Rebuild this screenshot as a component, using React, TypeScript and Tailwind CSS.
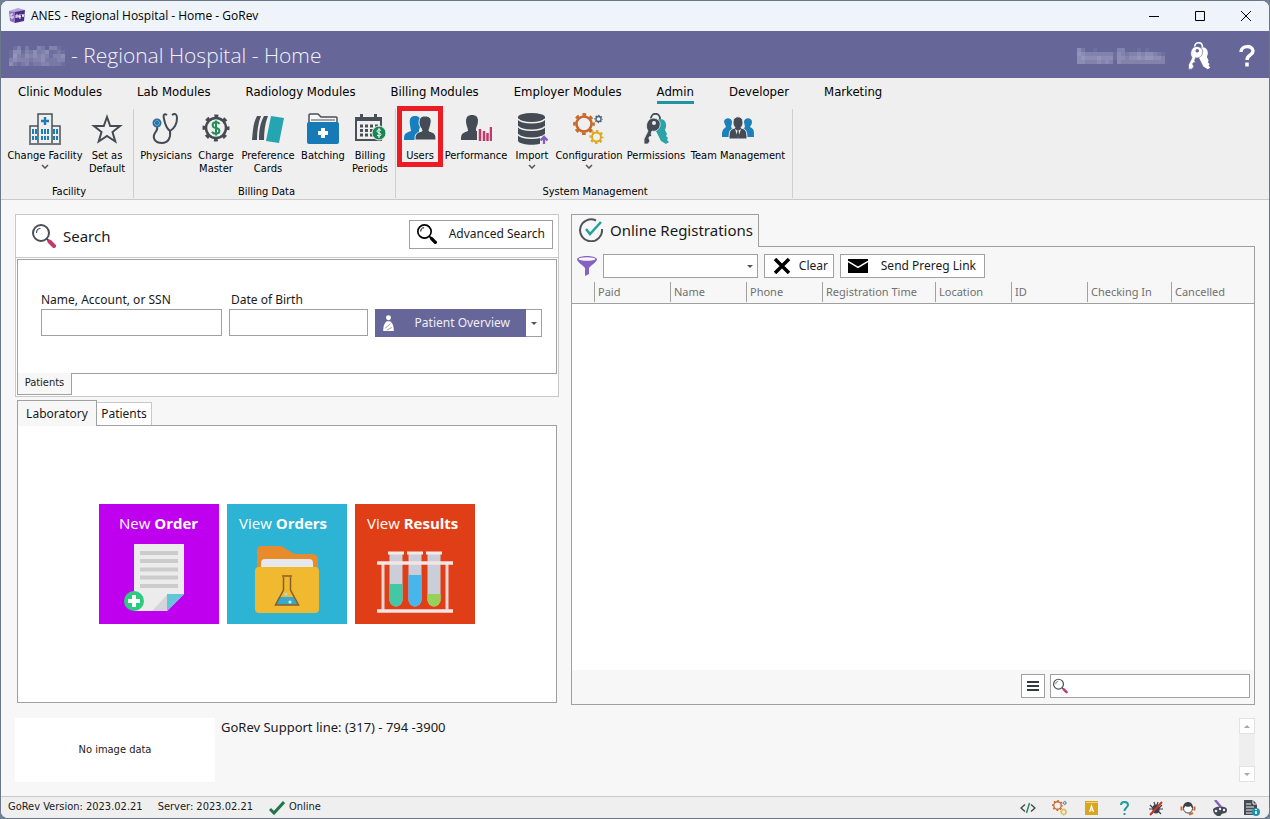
import React, { useState } from "react";

type IconProps = { className?: string };

const menuTabs = [
  "Clinic Modules",
  "Lab Modules",
  "Radiology Modules",
  "Billing Modules",
  "Employer Modules",
  "Admin",
  "Developer",
  "Marketing",
];

const columns = [
  { name: "", width: "w-[22px]" },
  { name: "Paid", width: "w-[76px]" },
  { name: "Name", width: "w-[76px]" },
  { name: "Phone", width: "w-[76px]" },
  { name: "Registration Time", width: "w-[113px]" },
  { name: "Location", width: "w-[76px]" },
  { name: "ID", width: "w-[76px]" },
  { name: "Checking In", width: "w-[84px]" },
  { name: "Cancelled", width: "" },
];

// a cog: ring plus a dashed circle for the teeth
function Cog({ x, y, r, color, line = 2 }: { x: number; y: number; r: number; color: string; line?: number }) {
  const outer = r + line * 0.8;
  const tooth = (Math.PI * 2 * outer) / 16;
  return (
    <g fill="none" stroke={color}>
      <circle cx={x} cy={y} r={r} strokeWidth={line} />
      <circle cx={x} cy={y} r={outer} strokeWidth={line} strokeDasharray={`${tooth} ${tooth}`} strokeDashoffset={tooth / 2} />
    </g>
  );
}

function LogoIcon() {
  return (
    <svg viewBox="0 0 16 16" className="size-4">
      <path d="M0 3 9 0l7 2-6 3z" fill="#b9a4dc" />
      <path d="M0 3l6 1v11L1 13z" fill="#8f74c0" />
      <path d="M6 4l10-2-1 11-9 2z" fill="#4b2f86" />
      <path d="M4 6H2v4h2V8M7 10V7h2v2H7M10 7h2M10 7v3h2M10 8.5h2M13 6l1 3 1-3" fill="none" stroke="#fff" strokeWidth="0.9" />
    </svg>
  );
}

function HospitalIcon() {
  return (
    <svg viewBox="0 0 32 32" className="size-8" fill="none" stroke="#4a5058" strokeWidth="1.5">
      <path d="M9 30V1h14v29M1 30V13h8M23 13h8v17M0 31h32" />
      <path d="M16 4v8M12 8h8" stroke="#1b7db8" strokeWidth="2.4" />
      <path d="M4 16v5M7 16v5M4 23v4M7 23v4M13 16v5M16 16v5M19 16v5M13 23v4M16 23v4M19 23v4M25 16v5M28 16v5M25 23v4M28 23v4" stroke="#1b7db8" strokeWidth="2" />
    </svg>
  );
}

function StarIcon() {
  return (
    <svg viewBox="0 0 32 32" className="size-8" fill="none" stroke="#454b53" strokeWidth="2">
      <path d="M16 4l3.200 9H29l-7.500 6 2.800 9.500L16 23l-8.300 5.500L10.500 19 3 13h9.800z" />
    </svg>
  );
}

function StethoscopeIcon() {
  return (
    <svg viewBox="0 0 32 32" className="size-8" fill="none" stroke="#454b53" strokeWidth="2">
      <path d="M17 2c-3-2-4 0-3 4 1 5 2 9 6 12 5-3 7-8 7-13 0-4-2-5-5-3" />
      <path d="M20 18c1 7-2 12-8 12-7 0-10-5-7-10 2-3 3-4 2-6" />
      <circle cx="7" cy="10" r="3.500" stroke="#2c6d9c" />
      <circle cx="7" cy="10" r="1.200" fill="#1b7db8" stroke="#1b7db8" />
    </svg>
  );
}

function ChargeIcon() {
  return (
    <svg viewBox="0 0 32 32" className="size-8">
      <g fill="none" stroke="#454b53">
        <circle cx="16" cy="15" r="10" strokeWidth="2.500" />
        <circle cx="16" cy="15" r="12" strokeWidth="3" strokeDasharray="4 5.425" strokeDashoffset="2" />
      </g>
      <path d="M19.500 11c-.7-1.300-2-1.700-3.500-1.700-4.500 0-4.500 5 0 5.700s4.500 5.700 0 5.700c-2 0-3.300-.6-4-2M16 7.500v15" fill="none" stroke="#1f9158" strokeWidth="2" />
    </svg>
  );
}

function CardsIcon() {
  return (
    <svg viewBox="0 0 32 32" className="size-8">
      <path d="M5 3h4C6 10 5 19 5 27H0C1 18 1 10 5 3zM12 3h4c-3 7-4 16-4 24H7c0-9 1-17 5-24z" fill="#4a5058" />
      <path d="M19 3l13 2-5 25-13-2z" fill="#25a5b0" />
    </svg>
  );
}

function BatchIcon() {
  return (
    <svg viewBox="0 0 32 32" className="size-8">
      <path d="M2 12V2q0-1 1-1h8l3 3h15q1 0 1 1v7" fill="#f6f6f6" stroke="#4a5058" strokeWidth="1.500" />
      <path d="M4 7h24" stroke="#4a5058" />
      <path d="M0 11q0-2 2-2h28q2 0 2 2v18q0 2-2 2H2q-2 0-2-2z" fill="#1779b5" />
      <path d="M16 15v10M11 20h10" stroke="#fff" strokeWidth="4" />
    </svg>
  );
}

function CalendarIcon() {
  return (
    <svg viewBox="0 0 32 32" className="size-8">
      <path d="M2 5h25v22H2z" fill="none" stroke="#4a5058" strokeWidth="2" />
      <path d="M1 4h27v4H1zM6 1h3v6H6zM20 1h3v6h-3z" fill="#4a5058" />
      <path d="M6 13h18M6 17.500h18M6 22h14" stroke="#4a5058" strokeWidth="3" strokeDasharray="3 2" />
      <circle cx="25" cy="20" r="7" fill="#198754" stroke="#efefef" />
      <path d="M27 17.500c-1-1.200-4-1-4 .7 0 2 4 1.300 4 3.300 0 1.700-3 1.900-4 .5M25 15v10" fill="none" stroke="#fff" />
    </svg>
  );
}

function UsersIcon() {
  return (
    <svg viewBox="0 0 32 32" className="size-8">
      <path d="M6 12C5 5 7 3 11 3s6 2 6 8l-2 6v3l-4 7H0c0-6 1-7 7-9z" fill="#177fbd" />
      <path d="M15 10c0-5 2-7 6-7s7 2 6 7-2 6-2 8c6 2 7 3 7 9H11c0-6 1-7 7-9 0-3-3-4-3-8z" fill="#454b55" stroke="#efefef" />
    </svg>
  );
}

function PerformanceIcon() {
  return (
    <svg viewBox="0 0 32 32" className="size-8">
      <path d="M6 8c0-4 2-6 6-6s6 2 6 6-2 6-2 8v2h1v9H1c0-6 1-7 7-9 0-4-2-5-2-10z" fill="#454b55" />
      <path d="M20 16v12M24 18v10M27.500 20v8M31 14v14" stroke="#c2386a" strokeWidth="2.500" />
    </svg>
  );
}

function DatabaseIcon() {
  return (
    <svg viewBox="0 0 32 32" className="size-8">
      <path d="M2 4v24c3 5 24 5 27 0V4z" fill="#454b55" />
      <ellipse cx="15.500" cy="4" rx="13.500" ry="4" fill="#454b55" />
      <path d="M2 6c4 5 23 5 27 0M2 13.500c4 5 23 5 27 0M2 21.500c4 5 23 5 27 0" fill="none" stroke="#efefef" strokeWidth="1.500" />
      <path d="M24 23h8v9h-8z" fill="#efefef" />
      <path d="M28 31v-7M24.500 27.500 28 24l3.500 3.500" fill="none" stroke="#8260c0" strokeWidth="2.300" />
    </svg>
  );
}

function GearsIcon({ className = "size-8" }: IconProps) {
  return (
    <svg viewBox="0 0 32 32" className={className}>
      <Cog x={11} y={11} r={7.5} color="#c9682a" line={2.6} />
      <Cog x={25.5} y={6} r={2.5} color="#4a6078" line={1.3} />
      <Cog x={23.5} y={24} r={4.5} color="#dfa81b" line={2} />
    </svg>
  );
}

function KeysIcon({ className = "size-8", front = "#454b55", back = "#2ba3a8", gap = "#efefef" }: IconProps & { front?: string; back?: string; gap?: string }) {
  return (
    <svg viewBox="0 0 32 32" className={className}>
      <path d="M17 7c5-3 10 1 9 7l-1 3 2 4-1 2 2 2-1 2 2 2-3 2-5-3-6-12z" fill={back} />
      <path d="M11 6c0-7 9-7 9 0" fill="none" stroke={front} strokeWidth="1.800" />
      <path d="M8 8c4-6 14-2 12 5-1 4-5 6-8 5l-1 3 1 2-3 1v2l1 2-2 3H4v-5l4-8c-2-3-2-7 0-10z" fill={front} stroke={gap} strokeWidth="0.800" />
      <circle cx="14" cy="10" r="2" fill={gap} />
    </svg>
  );
}

function TeamIcon() {
  return (
    <svg viewBox="0 0 32 32" className="size-8">
      <g fill="#1c81b8">
        <path d="M2 9c0-5 8-5 8 0 0 3-1 4-1 5l2 2v8H0c0-6 0-7 4-10z" />
        <path d="M22 9c0-5 8-5 8 0 0 3-2 4-2 5 4 2 4 3 4 10H21v-8l2-2z" />
      </g>
      <path d="M11 9c0-7 10-7 10 0 0 4-2 5-2 6 5 1 6 3 6 11H7c0-8 1-10 6-11 0-1-2-2-2-6z" fill="#454b55" stroke="#efefef" />
      <path d="M13 16l3 9 3-9-3 2z" fill="#efefef" />
      <path d="M15.300 18h1.400l.6 5-1.300 2-1.300-2z" fill="#454b55" />
    </svg>
  );
}

function MagnifierIcon({ className, ring = "#4a5058", handle = "#c2386a" }: IconProps & { ring?: string; handle?: string }) {
  return (
    <svg viewBox="0 0 24 24" className={className} fill="none">
      <circle cx="9" cy="9" r="8" stroke={ring} strokeWidth="2" />
      <path d="M4.500 9c0-3 1.500-4.500 4-4.500" stroke={ring} strokeWidth="1.200" />
      <path d="M14.500 14.500l2.500 2.500" stroke={ring} strokeWidth="2" />
      <path d="M17.500 17.500l4.500 4.500" stroke={handle} strokeWidth="4" strokeLinecap="round" />
    </svg>
  );
}

function Caret({ className = "" }: IconProps) {
  return (
    <svg viewBox="0 0 6 3" className={`h-[3px] w-1.5 ${className}`}>
      <path d="M0 0h6L3 3z" fill="#555" />
    </svg>
  );
}

// censored names are painted as a grid of lighter blocks
function Mosaic({ rows, size, className }: { rows: string[]; size: number; className: string }) {
  return (
    <svg viewBox={`0 0 ${rows[0].length * size} ${rows.length * size}`} className={className} shapeRendering="crispEdges" aria-hidden>
      {rows.map((row, y) =>
        row.split("").map((level, x) => (
          <rect key={`${x}-${y}`} x={x * size} y={y * size} width={size} height={size} fill="#d9d9ea" opacity={Number(level) / 12} />
        ))
      )}
    </svg>
  );
}

type Tool = { label: string; second?: string; width: string; icon: React.ReactNode; menu?: boolean };

const groups: { title: string; className: string; tools: Tool[] }[] = [
  {
    title: "Facility",
    className: "w-[133px] pl-1",
    tools: [
      { label: "Change Facility", width: "w-20", icon: <HospitalIcon />, menu: true },
      { label: "Set as", second: "Default", width: "w-11", icon: <StarIcon /> },
    ],
  },
  {
    title: "Billing Data",
    className: "w-[262px] pl-1",
    tools: [
      { label: "Physicians", width: "w-14", icon: <StethoscopeIcon /> },
      { label: "Charge", second: "Master", width: "w-11", icon: <ChargeIcon /> },
      { label: "Preference", second: "Cards", width: "w-15", icon: <CardsIcon /> },
      { label: "Batching", width: "w-[50px]", icon: <BatchIcon /> },
      { label: "Billing", second: "Periods", width: "w-11", icon: <CalendarIcon /> },
    ],
  },
  {
    title: "System Management",
    className: "w-[397px] pl-0.5",
    tools: [
      { label: "Users", width: "w-11", icon: <UsersIcon /> },
      { label: "Performance", width: "w-[68px]", icon: <PerformanceIcon /> },
      { label: "Import", width: "w-11", icon: <DatabaseIcon />, menu: true },
      { label: "Configuration", width: "w-[70px]", icon: <GearsIcon />, menu: true },
      { label: "Permissions", width: "w-16", icon: <KeysIcon /> },
      { label: "Team Management", width: "w-25", icon: <TeamIcon /> },
    ],
  },
];

function RibbonButton({ tool }: { tool: Tool }) {
  return (
    <button className={`relative flex shrink-0 flex-col items-center pt-1 ${tool.width}`}>
      {tool.icon}
      <span className="mt-1 text-[11px] leading-[13px] whitespace-nowrap">{tool.label}</span>
      {tool.second && <span className="text-[11px] leading-[13px]">{tool.second}</span>}
      {tool.menu && (
        <svg viewBox="0 0 8 5" className="mt-0.5 h-[5px] w-2" fill="none" stroke="#555" strokeWidth="1.500">
          <path d="M1 1l3 3 3-3" />
        </svg>
      )}
      {tool.label === "Users" && <span className="absolute -inset-x-px -top-[3px] h-[61px] border-5 border-[#ed1c24]" />}
    </button>
  );
}

function Ribbon() {
  const [active, setActive] = useState("Admin");
  return (
    <div className="border-b border-[#c9c9c9] bg-[#efefef] font-['DejaVu_Sans_Condensed','DejaVu_Sans',sans-serif] text-black [font-stretch:condensed]">
      <nav className="flex h-[31px] gap-[35px] pt-1 pl-[17px] text-[13px] leading-5">
        {menuTabs.map((tab) => (
          <button
            key={tab}
            onClick={() => setActive(tab)}
            className={`h-[22px] border-b-3 whitespace-nowrap ${active === tab ? "border-[#2094a3]" : "border-transparent"}`}
          >
            {tab}
          </button>
        ))}
      </nav>
      <div className="flex h-[90px] pb-px">
        {groups.map((group) => (
          <div key={group.title} className={`flex shrink-0 flex-col border-r border-[#cfcfcf] ${group.className}`}>
            <div className="flex flex-1 items-start">
              {group.tools.map((tool) => (
                <RibbonButton key={tool.label} tool={tool} />
              ))}
            </div>
            <div className="text-center text-[11px] leading-[13px]">{group.title}</div>
          </div>
        ))}
      </div>
    </div>
  );
}

function SearchPanel() {
  return (
    <section className="border border-[#c8c8c8] bg-white">
      <div className="flex h-[43px] items-center justify-between border-b border-[#c8c8c8] pr-[5px] pl-4">
        <h2 className="flex items-center gap-[7px] text-[15px]">
          <MagnifierIcon className="size-6" />
          Search
        </h2>
        <button className="mb-1 flex h-[29px] w-36 items-center justify-between border border-[#a0a0a0] px-[7px] text-[12px]">
          <MagnifierIcon className="size-5" ring="#000" handle="#000" />
          Advanced Search
        </button>
      </div>
      <div className="m-px flex flex-col">
        <div className="h-[115px] border border-[#a0a0a0] pt-[31px] pl-[23px]">
          <div className="flex gap-[7px]">
            <div className="w-[181px]">
              <label htmlFor="name" className="block text-[12px] leading-[18px] whitespace-nowrap">
                Name, Account, or SSN
              </label>
              <input id="name" className="h-[27px] w-full border border-[#a0a0a0] px-1 text-[12px]" />
            </div>
            <div className="w-[139px]">
              <label htmlFor="dob" className="block pl-0.5 text-[12px] leading-[18px]">
                Date of Birth
              </label>
              <input id="dob" className="h-[27px] w-full border border-[#a0a0a0] px-1 text-[12px]" />
            </div>
            <div className="flex pt-[18px]">
              <button className="flex h-7 w-[151px] items-center justify-between bg-[#666699] pr-4 pl-2 text-[12px] whitespace-nowrap text-[#eeeef8]">
                <svg viewBox="0 0 12 18" className="h-4 w-[11px]" fill="#fff">
                  <circle cx="6" cy="3" r="2.800" />
                  <path d="M4 7h4c3 2 4 6 4 11H0c0-5 1-9 4-11z" />
                  <path d="M2 15l6-5M4 17l6-3" stroke="#666699" strokeWidth="0.700" />
                </svg>
                Patient Overview
              </button>
              <button aria-label="More" className="flex h-7 w-4 items-center justify-center border border-l-0 border-[#a0a0a0]">
                <Caret />
              </button>
            </div>
          </div>
        </div>
        <button className="-mt-px h-[22px] w-[55px] border border-t-0 border-[#a0a0a0] bg-[#f7f7f7] font-['DejaVu_Sans_Condensed','DejaVu_Sans',sans-serif] text-[11px] [font-stretch:condensed]">
          Patients
        </button>
      </div>
    </section>
  );
}

function NewOrderArt() {
  return (
    <svg viewBox="1 0 72 72" className="size-18">
      <path d="M12 2h50v50L45 69H12z" fill="#ececec" />
      <path d="M62 52 45 69V52z" fill="#62c5dc" />
      <path d="M45 53v16H30z" fill="#d4d4da" />
      <path d="M18 11h38M18 19h38M18 27.500h38M18 35.500h38M18 44h38" stroke="#ccc" strokeWidth="4" />
      <circle cx="12" cy="59" r="10" fill="#2ccb7f" />
      <path d="M12 53v12M6 59h12" stroke="#fff" strokeWidth="4" />
    </svg>
  );
}

function FolderArt() {
  return (
    <svg viewBox="0 0 64 72" className="h-[72px] w-16">
      <path d="M2 26V9q0-5 5-5h17q4 0 7 3l5 3q3 2 6 2h15q6 0 6 6v8z" fill="#e78b2b" />
      <rect x="6" y="17" width="52" height="14" rx="4" fill="#e6e8ed" />
      <rect x="0" y="25" width="64" height="46" rx="4" fill="#f0b92f" />
      <path d="M24 55h15l4 8H20z" fill="#36a9cc" />
      <path d="M27 34h10M28.500 35v13l-8 15h23l-8-15V35" fill="none" stroke="#85602a" strokeWidth="1.500" />
      <circle cx="31" cy="52" r="1.500" fill="#9fe0ec" />
      <circle cx="35" cy="60" r="1.500" fill="#d8f3f8" />
    </svg>
  );
}

function TubesArt() {
  return (
    <svg viewBox="0 0 76 72" className="h-[72px] w-[76px]">
      <path d="M6 20v50M70 20v50" stroke="#ecd5d5" strokeWidth="3" />
      <path d="M12.500 12h13v46a6.500 6.500 0 0 1-13 0zM31.500 12h13v46a6.500 6.500 0 0 1-13 0zM50.500 12h13v46a6.500 6.500 0 0 1-13 0z" fill="#c9ced8" />
      <path d="M12.500 42h13v16a6.500 6.500 0 0 1-13 0z" fill="#42c8a4" />
      <path d="M31.500 33h13v25a6.500 6.500 0 0 1-13 0z" fill="#46b6ec" />
      <path d="M50.500 52h13v6a6.500 6.500 0 0 1-13 0z" fill="#96d258" />
      <path d="M11 11h16M30 11h16M49 11h16" stroke="#f5e8e8" strokeWidth="3" />
      <path d="M0 21h76M0 69h76" stroke="#f5e4e4" strokeWidth="3.500" />
    </svg>
  );
}

const tiles = [
  { verb: "New", noun: "Order", color: "bg-[#bf00ee]", art: <NewOrderArt />, pad: "pl-5" },
  { verb: "View", noun: "Orders", color: "bg-[#2db3d3]", art: <FolderArt />, pad: "pl-3" },
  { verb: "View", noun: "Results", color: "bg-[#e03e16]", art: <TubesArt />, pad: "pl-3" },
];

function LaboratoryPanel() {
  return (
    <section className="mt-[3px] flex flex-1 flex-col px-0.5 pb-0.5">
      <div className="flex items-end text-[12px]">
        <button className="relative -mb-px h-[26px] w-20 border border-b-0 border-[#a0a0a0] bg-[#f7f7f7]">Laboratory</button>
        <button className="h-[23px] w-[55px] border border-b-0 border-l-0 border-[#c8c8c8] bg-white">Patients</button>
      </div>
      <div className="flex flex-1 items-center justify-center gap-2 border border-[#a0a0a0] bg-white">
        {tiles.map((tile) => (
          <button key={tile.noun} className={`flex size-30 flex-col items-center pt-[7px] text-white ${tile.color}`}>
            <span className={`self-start font-['Open_Sans',sans-serif] text-[15px] leading-6 whitespace-nowrap ${tile.pad}`}>
              {tile.verb} <b>{tile.noun}</b>
            </span>
            <span className="mt-[7px]">{tile.art}</span>
          </button>
        ))}
      </div>
    </section>
  );
}

function RegistrationsPanel() {
  return (
    <section className="flex flex-1 flex-col">
      <div className="relative -mb-px flex h-[33px] w-[188px] items-center gap-[7px] border border-b-0 border-[#a0a0a0] bg-[#f7f7f7] pb-0.5 pl-[7px]">
        <svg viewBox="0 0 24 24" className="size-6" fill="none" strokeWidth="2">
          <path d="M17 2.500A11 11 0 1 0 23 11" stroke="#505459" />
          <path d="M7 11l4 5L22 4" stroke="#21a39b" strokeWidth="2.500" />
        </svg>
        <h2 className="text-[15px] whitespace-nowrap">Online Registrations</h2>
      </div>
      <div className="flex flex-1 flex-col border border-[#a0a0a0]">
        <div className="flex h-[34px] items-center gap-1.5 pt-1 pl-[5px]">
          <svg viewBox="0 0 20 20" className="size-5">
            <path d="M0 3c2-4 18-4 20 0 0 3-7 7-8 9v6l-4 2v-8C7 10 0 6 0 3z" fill="#8660c2" />
            <ellipse cx="10" cy="3" rx="8.500" ry="1.700" fill="#f7f7f7" />
          </svg>
          <div className="relative w-[155px]">
            <select aria-label="Filter" className="block h-6 w-full appearance-none border border-[#a0a0a0] bg-white px-1 text-[12px]">
              <option></option>
            </select>
            <Caret className="pointer-events-none absolute top-[11px] right-[5px]" />
          </div>
          <button className="flex h-6 w-[70px] items-center justify-between border border-[#a0a0a0] bg-white pr-[5px] pl-2 text-[12px]">
            <svg viewBox="0 0 18 16" className="h-4 w-[18px]" stroke="#000" strokeWidth="3.500">
              <path d="M2 1l14 14M16 1L2 15" />
            </svg>
            Clear
          </button>
          <button className="flex h-6 w-[145px] items-center justify-between border border-[#a0a0a0] bg-white pr-2 pl-[7px] text-[12px]">
            <svg viewBox="0 0 20 14" className="h-3.5 w-5">
              <path d="M0 0h20v14H0z" />
              <path d="M0 2.500l10 6 10-6" fill="none" stroke="#fff" strokeWidth="1.500" />
            </svg>
            Send Prereg Link
          </button>
        </div>
        <div className="flex-1 bg-white">
          <table className="w-full table-fixed border-b border-[#a0a0a0] bg-[#f7f7f7] text-left text-[11px] text-[#707070]">
            <thead>
              <tr className="h-[22px]">
                {columns.map((column) => (
                  <th key={column.name} className={`p-0 font-normal whitespace-nowrap ${column.width}`}>
                    <span className={column.name ? "block h-5 border-l border-[#a0a0a0] pl-[3px] leading-5" : ""}>{column.name}</span>
                  </th>
                ))}
              </tr>
            </thead>
          </table>
        </div>
        <div className="flex h-[34px] items-center justify-end gap-[5px] pr-1 pb-0.5">
          <button aria-label="Menu" className="flex size-6 items-center justify-center border border-[#a0a0a0] bg-white">
            <svg viewBox="0 0 12 10" className="h-2.5 w-3" stroke="#333a42" strokeWidth="2">
              <path d="M0 1h12M0 5h12M0 9h12" />
            </svg>
          </button>
          <label className="flex h-6 w-[200px] items-center border border-[#a0a0a0] bg-white pl-0.5">
            <MagnifierIcon className="size-4" />
            <input aria-label="Find" className="w-full min-w-0 px-1 text-[12px] outline-none" />
          </label>
        </div>
      </div>
    </section>
  );
}

function StatusBar() {
  const icon = "size-4";
  return (
    <footer className="flex h-[22px] items-center justify-between border-t border-[#c9c9c9] bg-[#efefef] pr-[9px] pl-[7px] font-['DejaVu_Sans_Condensed','DejaVu_Sans',sans-serif] text-[11px] [font-stretch:condensed]">
      <div className="flex items-center whitespace-nowrap">
        <span>GoRev Version: 2023.02.21</span>
        <span className="ml-[15px]">Server: 2023.02.21</span>
        <svg viewBox="0 0 16 14" className="mr-1 ml-4 h-3.5 w-4" fill="none" stroke="#20764d" strokeWidth="3">
          <path d="M1 8l4 4L15 1" />
        </svg>
        <span>Online</span>
      </div>
      <div className="flex gap-4">
        <svg viewBox="0 0 16 16" className={icon} fill="none" stroke="#454b55" strokeWidth="1.500">
          <path d="M5 4.500 1 8l4 3.500M11 4.500 15 8l-4 3.500" />
          <path d="M9.500 3l-3 10" stroke="#2c8a5e" />
        </svg>
        <GearsIcon className={icon} />
        <svg viewBox="0 0 16 16" className={icon}>
          <path d="M1 1h13v14H1z" fill="#dba51c" />
          <path d="M2 2.500h12" stroke="#f6dfa0" strokeWidth="0.800" />
          <path d="M5.500 12 7.500 6l2 6M6 10h3" fill="none" stroke="#fff" strokeWidth="1.200" />
        </svg>
        <svg viewBox="0 0 16 16" className={icon} fill="none" stroke="#219aa5" strokeWidth="2">
          <path d="M5 5c0-4 7-4 7 0 0 2.500-3.500 2.500-3.500 6M8.500 13v2" />
        </svg>
        <svg viewBox="0 0 16 16" className={icon} fill="none" stroke="#3b4048" strokeWidth="1.200">
          <ellipse cx="8" cy="9" rx="3" ry="4" fill="#3b4048" />
          <path d="M6 2l1 3M10 2 9 5M2 5l3 3M14 5l-3 3M1 9h14M3 14l3-3M13 14l-3-3" />
          <path d="M2 15 14 2" stroke="#c6392d" strokeWidth="2" />
        </svg>
        <svg viewBox="0 0 16 16" className={icon}>
          <circle cx="8" cy="8.500" r="4.500" fill="#fff" stroke="#3b4048" />
          <path d="M3 8C3 0 13 0 13 8c-1 0-2-1-2-2-1 1-5 1-6 0 0 1-1 2-2 2z" fill="#3b4048" />
          <path d="M1.500 6.500v4M14.500 6.500v4M13 13l-4 1.500" fill="none" stroke="#c96a32" strokeWidth="2" />
        </svg>
        <svg viewBox="0 0 16 16" className={icon}>
          <path d="M1 10c0-4 14-5 14 0s-5 2-6 5-8 0-8-5z" fill="#454b55" />
          <g fill="#efefef">
            <circle cx="4" cy="11" r="1.300" />
            <circle cx="8" cy="9" r="1.200" />
            <circle cx="12" cy="10" r="1.200" />
          </g>
          <path d="M3 0l6 7" stroke="#8660c2" strokeWidth="2.500" />
        </svg>
        <svg viewBox="0 0 16 16" className={icon}>
          <path d="M0 0h9l4 4v11H0z" fill="#454b55" />
          <path d="M2 4h5M2 7h8M2 10h8M2 13h8M9 0v4h4" fill="none" stroke="#efefef" />
          <circle cx="12" cy="12" r="4" fill="#2192aa" />
          <path d="M12 9v1M12 11v3" stroke="#fff" strokeWidth="1.500" />
        </svg>
      </div>
    </footer>
  );
}

export default function App() {
  return (
    <div className="flex min-h-screen bg-[#6f8197] font-['Noto_Sans',sans-serif] text-[#1a1a1a]">
      <div className="flex flex-1 flex-col overflow-hidden rounded-lg border border-[#6b7686] bg-[#f7f7f7]">
        <header className="flex h-[30px] items-center justify-between bg-[#eff4fb] pl-2">
          <div className="flex items-center gap-1.5 font-['Open_Sans',sans-serif] text-[12px] text-black">
            <LogoIcon />
            ANES - Regional Hospital - Home - GoRev
          </div>
          <div className="flex">
            {[
              { name: "Minimize", path: "M1 6.5h10" },
              { name: "Maximize", path: "M1.5 1.5h9v9h-9z" },
              { name: "Close", path: "M1 1l10 10M11 1L1 11" },
            ].map((control) => (
              <button key={control.name} aria-label={control.name} className="flex w-[46px] justify-center">
                <svg viewBox="0 0 12 12" className="size-3" fill="none" stroke="#000">
                  <path d={control.path} />
                </svg>
              </button>
            ))}
          </div>
        </header>

        <div className="flex h-[47px] items-center justify-between bg-[#666699] pt-0.5 pr-3 pl-2 text-[#f2f2fa]">
          <h1 className="flex items-center gap-1.5 font-['Open_Sans',sans-serif] text-[21px] font-light">
            <Mosaic className="h-5 w-14" size={4} rows={["01302003203310", "14413242341121", "15324343431334", "34333233422233", "42123122332221"]} />
            - Regional Hospital - Home
          </h1>
          <div className="flex items-center">
            <Mosaic className="h-4 w-[92px]" size={4} rows={["04200100000330001010000", "05433333331432334344321", "04544454441443445455443", "04433343430433333333333"]} />
            <button aria-label="Change user" className="ml-5">
              <KeysIcon className="size-7" front="#fff" back="#fff" gap="#666699" />
            </button>
            <button aria-label="Help" className="ml-6">
              <svg viewBox="0 0 20 24" className="h-6 w-5" fill="none" stroke="#fff" strokeWidth="3.500">
                <path d="M4 8c0-7 12-7 12-1 0 4-6 4-6 9M10 18.500v4" />
              </svg>
            </button>
          </div>
        </div>

        <Ribbon />

        <main className="flex flex-1 flex-col px-3.5 pt-3.5">
          <div className="grid flex-1 grid-cols-[minmax(544px,44fr)_minmax(684px,56fr)] gap-3">
            <div className="flex flex-col">
              <SearchPanel />
              <LaboratoryPanel />
            </div>
            <RegistrationsPanel />
          </div>
          <div className="mt-[13px] mb-3.5 flex h-16">
            <div className="flex w-[200px] items-center justify-center bg-white font-['DejaVu_Sans_Condensed','DejaVu_Sans',sans-serif] text-[11px] [font-stretch:condensed]">
              No image data
            </div>
            <p className="flex-1 pl-1.5 text-[13px] leading-[18px]">GoRev Support line: (317) - 794 -3900</p>
            <div className="flex w-4 flex-col justify-between bg-[#efefef]">
              <button aria-label="Scroll up" className="flex size-4 items-center justify-center border border-[#e2e2e2] bg-white">
                <Caret className="rotate-180 opacity-50" />
              </button>
              <button aria-label="Scroll down" className="flex size-4 items-center justify-center border border-[#e2e2e2] bg-white">
                <Caret className="opacity-50" />
              </button>
            </div>
          </div>
        </main>

        <StatusBar />
      </div>
    </div>
  );
}
